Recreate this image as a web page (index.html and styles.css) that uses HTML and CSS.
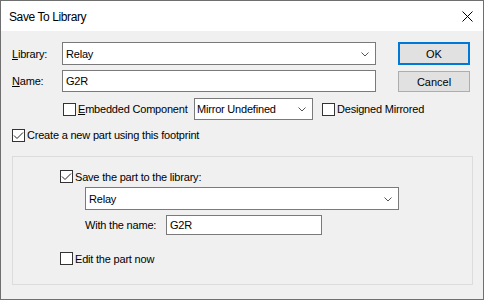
FILE: index.html
```html
<!DOCTYPE html>
<html lang="en">
<head>
    <meta charset="UTF-8">
    <title>Save To Library</title>
    <link rel="stylesheet" href="styles.css">
</head>
<body>

    <div class="dialog">
        <!-- Title bar -->
        <div class="titlebar">
            <span class="title">Save To Library</span>
            <svg class="close-icon" width="11" height="11" viewBox="0 0 11 11">
                <path d="M0.5 0.5 L10.5 10.5 M10.5 0.5 L0.5 10.5" stroke="#000" stroke-width="1" fill="none"/>
            </svg>
        </div>

        <div class="dialog-body">
            <div class="top-grid">
                <label class="field-label"><u>L</u>ibrary:</label>
                <div class="combo">
                    <span>Relay</span>
                    <svg class="chevron" width="8" height="5" viewBox="0 0 8 5"><path d="M0.5 0.5 L4 4 L7.5 0.5" stroke="#555" fill="none"/></svg>
                </div>
                <div></div>
                <button class="btn btn-default">OK</button>

                <label class="field-label"><u>N</u>ame:</label>
                <div class="textbox">G2R</div>
                <div></div>
                <button class="btn btn-cancel">Cancel</button>
            </div>

            <div class="options-row">
                <div class="check-wrap embedded">
                    <span class="checkbox"></span>
                    <span><u>E</u>mbedded Component</span>
                </div>
                <div class="combo combo-mirror">
                    <span>Mirror Undefined</span>
                    <svg class="chevron" width="8" height="5" viewBox="0 0 8 5"><path d="M0.5 0.5 L4 4 L7.5 0.5" stroke="#555" fill="none"/></svg>
                </div>
                <div class="check-wrap designed">
                    <span class="checkbox"></span>
                    <span>Designed Mirrored</span>
                </div>
            </div>

            <div class="check-wrap create-row">
                <span class="checkbox checked">
                    <svg width="11" height="11" viewBox="0 0 11 11"><path d="M1 5.5 L4 8.5 L10 2.5" stroke="#222" stroke-width="1" fill="none"/></svg>
                </span>
                <span>Create a new part using this footprint</span>
            </div>

            <!-- New part group -->
            <div class="group-box">
                <div class="check-wrap">
                    <span class="checkbox checked">
                        <svg width="11" height="11" viewBox="0 0 11 11"><path d="M1 5.5 L4 8.5 L10 2.5" stroke="#222" stroke-width="1" fill="none"/></svg>
                    </span>
                    <span>Save the part to the library:</span>
                </div>
                <div class="combo combo-lib">
                    <span>Relay</span>
                    <svg class="chevron" width="8" height="5" viewBox="0 0 8 5"><path d="M0.5 0.5 L4 4 L7.5 0.5" stroke="#555" fill="none"/></svg>
                </div>
                <div class="name-row">
                    <label class="name-label">With the name:</label>
                    <div class="textbox textbox-small">G2R</div>
                </div>
                <div class="check-wrap edit-row">
                    <span class="checkbox"></span>
                    <span>Edit the part now</span>
                </div>
            </div>
        </div>
    </div>

</body>
</html>
```

FILE: styles.css
```css
/* General Styles */
* {
    margin: 0;
    padding: 0;
    box-sizing: border-box;
    font-family: 'Liberation Sans', Arial, sans-serif;
}

body {
    width: 484px;
    height: 300px;
    font-size: 11px;
    letter-spacing: -0.2px;
    color: #000;
}

.dialog {
    width: 484px;
    height: 300px;
    border: 1px solid #6f6f6f;
    background-color: #f0f0f0;
    display: flex;
    flex-direction: column;
}

/* Title bar */
.titlebar {
    height: 30px;
    background-color: #fff;
    display: flex;
    align-items: center;
    justify-content: space-between;
    padding: 0 10px 0 8px;
}

.title {
    font-size: 12px;
    letter-spacing: -0.4px;
    padding-top: 1px;
}

.close-icon {
    margin-top: 1px;
}

.dialog-body {
    padding: 11px 0 0 11px;
}

/* Library / Name rows */
.top-grid {
    display: grid;
    grid-template-columns: 50px 314px 22px 72px;
    grid-template-rows: 23px 22px;
    row-gap: 5px;
}

.field-label {
    display: flex;
    align-items: center;
}

.combo,
.textbox {
    background-color: #fff;
    border: 1px solid #7a7a7a;
    display: flex;
    align-items: center;
    justify-content: space-between;
    padding: 0 6px 0 3px;
}

.chevron {
    margin-top: 1px;
}

.btn {
    font-size: 11px;
    background-color: #e1e1e1;
    color: #000;
    cursor: pointer;
}

.btn-default {
    border: 2px solid #0078d7;
}

.btn-cancel {
    border: 1px solid #adadad;
    height: 21px;
    margin-top: 1px;
}

/* Embedded / mirror row */
.options-row {
    display: flex;
    align-items: center;
    height: 22px;
    margin-top: 6px;
}

.check-wrap {
    display: flex;
    align-items: center;
    gap: 2px;
}

.embedded {
    width: 131px;
    margin-left: 51px;
}

.combo-mirror {
    width: 119px;
    height: 22px;
    padding-left: 2px;
}

.designed {
    margin-left: 9px;
}

.checkbox {
    width: 13px;
    height: 13px;
    border: 1px solid #333;
    background-color: #fff;
    display: flex;
    align-items: center;
    justify-content: center;
    flex-shrink: 0;
}

.create-row {
    margin-top: 8px;
    height: 14px;
}

/* Group box */
.group-box {
    width: 461px;
    height: 129px;
    margin-top: 14px;
    border: 1px solid #dcdcdc;
    padding: 13px 0 0 47px;
}

.combo-lib {
    width: 314px;
    height: 23px;
    margin: 4px 0 0 25px;
}

.name-row {
    display: flex;
    align-items: center;
    margin: 5px 0 0 25px;
}

.name-label {
    width: 81px;
}

.textbox-small {
    width: 156px;
    height: 20px;
}

.edit-row {
    margin-top: 17px;
}
```
